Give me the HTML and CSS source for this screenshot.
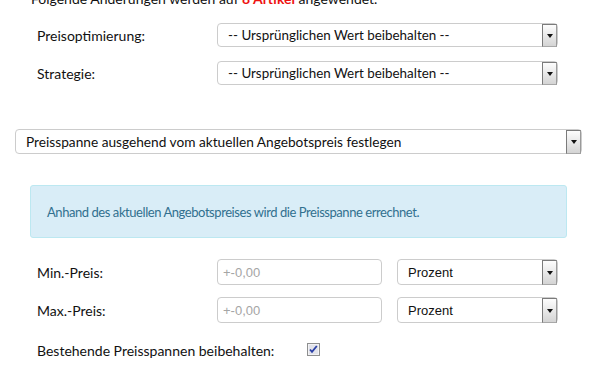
FILE: index.html
```html
<!DOCTYPE html>
<html lang="de">
<head>
    <meta charset="UTF-8">
    <meta name="viewport" content="width=device-width, initial-scale=1.0">
    <title>Preisoptimierung</title>
    <link rel="stylesheet" href="styles.css">
</head>
<body>
    <div class="page">
        <p class="intro">Folgende Änderungen werden auf <strong class="count">8 Artikel</strong> angewendet.</p>

        <div class="form-row first">
            <label>Preisoptimierung:</label>
            <div class="select wide">
                <span class="select-text">-- Ursprünglichen Wert beibehalten --</span>
                <span class="select-arrow"></span>
            </div>
        </div>
        <div class="form-row">
            <label>Strategie:</label>
            <div class="select wide">
                <span class="select-text">-- Ursprünglichen Wert beibehalten --</span>
                <span class="select-arrow"></span>
            </div>
        </div>

        <div class="select full">
            <span class="select-text">Preisspanne ausgehend vom aktuellen Angebotspreis festlegen</span>
            <span class="select-arrow"></span>
        </div>

        <div class="info-box">Anhand des aktuellen Angebotspreises wird die Preisspanne errechnet.</div>

        <div class="form-row price-row">
            <label>Min.-Preis:</label>
            <input class="price-input" type="text" placeholder="+-0,00">
            <div class="select unit">
                <span class="select-text plain">Prozent</span>
                <span class="select-arrow"></span>
            </div>
        </div>
        <div class="form-row price-row second">
            <label>Max.-Preis:</label>
            <input class="price-input" type="text" placeholder="+-0,00">
            <div class="select unit">
                <span class="select-text plain">Prozent</span>
                <span class="select-arrow"></span>
            </div>
        </div>

        <div class="form-row check-row">
            <label class="long">Bestehende Preisspannen beibehalten:</label>
            <span class="checkbox">
                <svg width="13" height="13" viewBox="0 0 13 13">
                    <rect x="0.5" y="0.5" width="12" height="12" fill="#e2e3ea" stroke="#8e8f8f"/>
                    <rect x="1.5" y="1.5" width="10" height="10" fill="none" stroke="#f2f2f5"/>
                    <path d="M3 6.5 L5 8.8 L9.8 3" fill="none" stroke="#2a3fa6" stroke-width="1.8"/>
                </svg>
            </span>
        </div>
    </div>
</body>
</html>
```

FILE: styles.css
```css
* {
    margin: 0;
    padding: 0;
    box-sizing: border-box;
}

body {
    background: #ffffff;
    color: #111;
    font-family: "Lato", sans-serif;
    font-size: 14px;
    overflow: hidden;
}

.page {
    width: 598px;
    padding: 0 16px 0 15px;
    margin-top: -10px;
}

.intro {
    margin-left: 16px;
    line-height: 18px;
}

.count {
    color: #ee1111;
}

.form-row {
    display: flex;
    align-items: center;
    margin-left: 22px;
    height: 24px;
    margin-top: 14px;
}

.form-row.first {
    margin-top: 15px;
}

.form-row label {
    width: 180px;
    flex: none;
}

.select {
    display: flex;
    align-items: stretch;
    height: 24px;
    border: 1px solid #cccccc;
    border-radius: 4px;
    background: #ffffff;
    font-size: 13.4px;
}

.select-text {
    flex: 1;
    display: flex;
    align-items: center;
    padding-left: 10px;
    white-space: nowrap;
    overflow: hidden;
}

.select-text.plain {
    font-family: "Liberation Sans", Arial, sans-serif;
    font-size: 13px;
}

.select-arrow {
    width: 15px;
    flex: none;
    margin: 0 0 -1px 0;
    border: 1px solid #7b7b7b;
    border-right-color: #9a9a9a;
    border-bottom-color: #a8a8a8;
    background: linear-gradient(#fdfdfd, #d4d4d4);
    display: flex;
    align-items: center;
    justify-content: center;
}

.select-arrow::after {
    content: "";
    border-left: 3.5px solid transparent;
    border-right: 3.5px solid transparent;
    border-top: 4px solid #111;
}

.select.wide {
    width: 341px;
}

.select.full {
    width: 567px;
    height: 25px;
    margin-top: 44px;
    font-size: 13.7px;
}

.info-box {
    margin: 31px 0 0 15px;
    width: 537px;
    height: 53px;
    padding: 0 16px;
    display: flex;
    align-items: center;
    background: #d9edf7;
    border: 1px solid #bce8f1;
    border-radius: 3px;
    color: #31708f;
    font-size: 13px;
    letter-spacing: -0.44px;
}

.price-row {
    height: 26px;
    margin-top: 21px;
}

.price-row.second {
    margin-top: 12px;
}

.price-input {
    width: 165px;
    height: 26px;
    border: 1px solid #cccccc;
    border-radius: 4px;
    padding-left: 5px;
    font-family: "Liberation Sans", Arial, sans-serif;
    font-size: 13px;
    color: #333;
}

.price-input::placeholder {
    color: #a5a5a5;
}

.select.unit {
    width: 161px;
    height: 26px;
    margin-left: 15px;
}

.check-row {
    margin-top: 15px;
}

.check-row label.long {
    width: 270px;
}

.checkbox {
    display: flex;
    width: 13px;
    height: 13px;
    margin-top: -1px;
}
```
